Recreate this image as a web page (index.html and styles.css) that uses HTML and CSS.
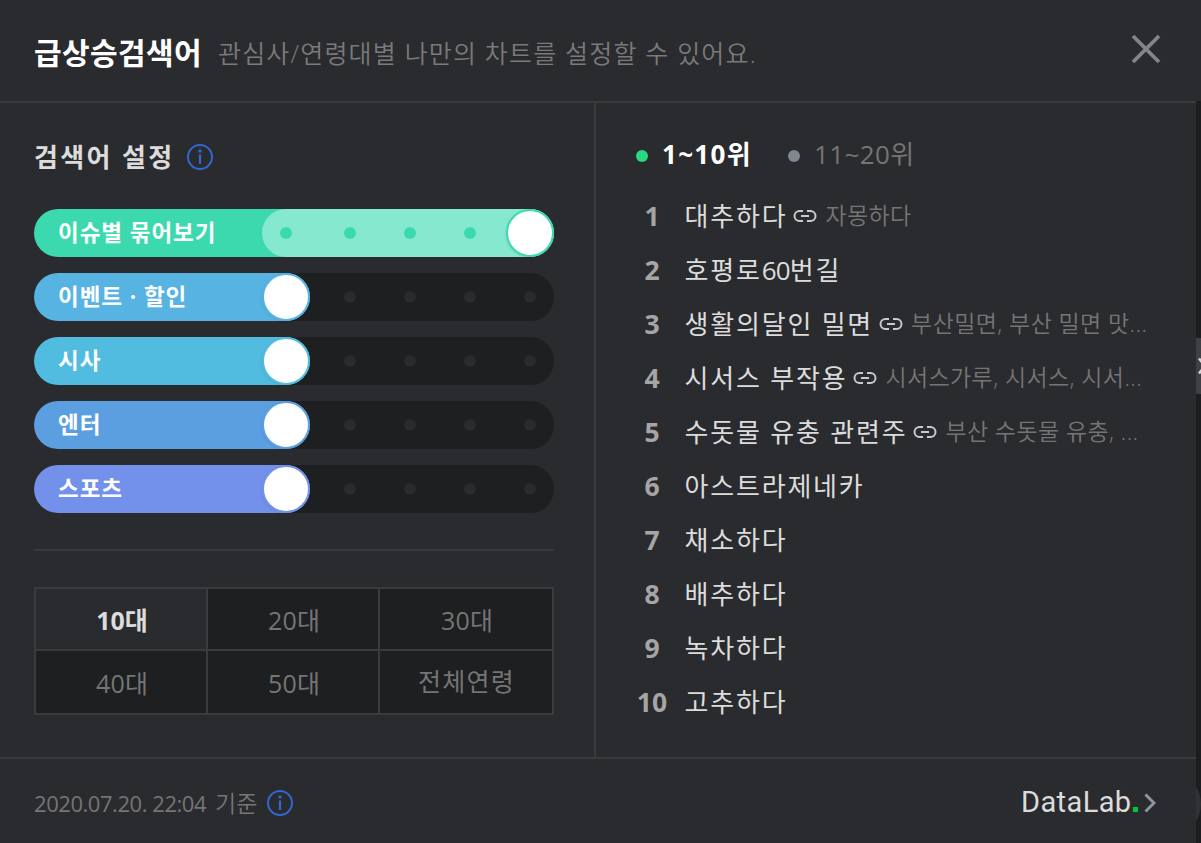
FILE: index.html
```
<!DOCTYPE html>
<html lang="ko">
<head>
    <meta charset="utf-8">
    <title>급상승검색어</title>
    <link rel="stylesheet" href="styles.css">
</head>
<body>
    <svg class="symbols">
        <symbol id="info" viewBox="0 0 26 26">
            <circle cx="13" cy="13" r="12" fill="none" stroke="currentColor" stroke-width="2"/>
            <path d="M13 10.5V20" stroke="currentColor" stroke-width="2.200" fill="none"/>
            <circle cx="13" cy="7" r="1.700" fill="currentColor"/>
        </symbol>
        <symbol id="link" viewBox="0 0 24 14">
            <path d="M10 2H6.500a5 5 0 0 0 0 10H10M14 2h3.500a5 5 0 0 1 0 10H14M8 7h8" fill="none" stroke="currentColor" stroke-width="2"/>
        </symbol>
    </svg>

    <div class="panel">
        <header class="header">
            <h1>급상승검색어</h1>
            <p class="desc">관심사/연령대별 나만의 차트를 설정할 수 있어요.</p>
            <button type="button" class="close" aria-label="닫기">
                <svg width="30" height="30" viewBox="0 0 30 30"><path d="M2 2l26 26M28 2L2 28" stroke="#80868b" stroke-width="3.800" fill="none"/></svg>
            </button>
        </header>

        <div class="content">
            <section class="setting">
                <h2>검색어 설정 <svg class="info"><use href="#info"/></svg></h2>
                <div class="sliders">
                    <div class="slider issue full">
                        <div class="fill"><span class="label">이슈별 묶어보기</span></div>
                        <div class="steps"><i></i><i></i><i></i><i></i><b class="knob"></b></div>
                    </div>
                    <div class="slider event">
                        <div class="fill"><span class="label">이벤트 · 할인</span></div>
                        <div class="steps"><b class="knob"></b><i></i><i></i><i></i><i></i></div>
                    </div>
                    <div class="slider news">
                        <div class="fill"><span class="label">시사</span></div>
                        <div class="steps"><b class="knob"></b><i></i><i></i><i></i><i></i></div>
                    </div>
                    <div class="slider enter">
                        <div class="fill"><span class="label">엔터</span></div>
                        <div class="steps"><b class="knob"></b><i></i><i></i><i></i><i></i></div>
                    </div>
                    <div class="slider sports">
                        <div class="fill"><span class="label">스포츠</span></div>
                        <div class="steps"><b class="knob"></b><i></i><i></i><i></i><i></i></div>
                    </div>
                </div>
                <div class="ages">
                    <span class="on">10대</span>
                    <span>20대</span>
                    <span>30대</span>
                    <span>40대</span>
                    <span>50대</span>
                    <span class="all">전체연령</span>
                </div>
            </section>

            <section class="ranking">
                <div class="tabs">
                    <span class="tab on">1~10위</span>
                    <span class="tab">11~20위</span>
                </div>
                <ol class="list">
                    <li><em>1</em><span class="word">대추하다</span><svg class="link"><use href="#link"/></svg><span class="rel">자몽하다</span></li>
                    <li><em>2</em><span class="word">호평로<span class="num">60</span>번길</span></li>
                    <li><em>3</em><span class="word">생활의달인 밀면</span><svg class="link"><use href="#link"/></svg><span class="rel">부산밀면, 부산 밀면 맛...</span></li>
                    <li><em>4</em><span class="word">시서스 부작용</span><svg class="link"><use href="#link"/></svg><span class="rel">시서스가루, 시서스, 시서...</span></li>
                    <li><em>5</em><span class="word">수돗물 유충 관련주</span><svg class="link"><use href="#link"/></svg><span class="rel">부산 수돗물 유충, ...</span></li>
                    <li><em>6</em><span class="word">아스트라제네카</span></li>
                    <li><em>7</em><span class="word">채소하다</span></li>
                    <li><em>8</em><span class="word">배추하다</span></li>
                    <li><em>9</em><span class="word">녹차하다</span></li>
                    <li><em>10</em><span class="word">고추하다</span></li>
                </ol>
            </section>
        </div>

        <footer class="footer">
            <p class="date"><span>2020.07.20. 22:04</span> 기준</p>
            <svg class="info"><use href="#info"/></svg>
            <a class="datalab"><span class="logo">DataLab</span><i class="dot"></i><svg width="12" height="20" viewBox="0 0 12 20"><path d="M1.500 1.500L10 10l-8.500 8.500" stroke="#8e959d" stroke-width="3" fill="none"/></svg></a>
        </footer>
    </div>

    <div class="side">
        <div class="next"><svg width="5" height="20" viewBox="0 0 5 20"><path d="M3 2.500L9 10l-6 7.500" stroke="#d5d7da" stroke-width="2.500" fill="none"/></svg></div>
        <div class="round"></div>
    </div>
</body>
</html>
```
FILE: styles.css
```
* {
    box-sizing: border-box;
}
body {
    display: flex;
    width: 1201px;
    height: 843px;
    margin: 0;
    overflow: hidden;
    background: #2a2b2e;
    color: #dcdcdc;
    font-family: "Open Sans", "Noto Sans CJK KR", sans-serif;
}
h1, h2, p, ol {
    margin: 0;
    padding: 0;
}
.symbols {
    position: absolute;
    width: 0;
    height: 0;
}
.panel {
    display: flex;
    flex-direction: column;
    width: 1196px;
    flex: none;
}

/* header */
.header {
    display: flex;
    align-items: center;
    height: 103px;
    padding: 4px 35px 0 34px;
    border-bottom: 2px solid #3a3b3d;
}
h1 {
    width: 184px;
    font-size: 30px;
    line-height: 40px;
    letter-spacing: 0.4px;
    color: #fff;
    white-space: nowrap;
}
.desc {
    font-size: 25px;
    line-height: 40px;
    letter-spacing: 1.180px;
    color: #7a7a7a;
    font-weight: 350;
    white-space: nowrap;
}
.close {
    display: flex;
    margin: -8px 0 0 auto;
    padding: 0;
    border: 0;
    background: none;
}

/* left side */
.content {
    display: flex;
    height: 654px;
}
.setting {
    width: 596px;
    padding: 34px 40px 0 34px;
    border-right: 2px solid #3a3b3d;
}
h2 {
    display: flex;
    align-items: center;
    gap: 13px;
    height: 40px;
    font-size: 26px;
    line-height: 38px;
    letter-spacing: 2.350px;
    white-space: nowrap;
}
.info {
    width: 26px;
    height: 26px;
    color: #3267d0;
}
.sliders {
    display: flex;
    flex-direction: column;
    gap: 16px;
    margin-top: 32px;
    padding-bottom: 36px;
    border-bottom: 2px solid #3a3b3f;
}
.slider {
    display: grid;
    grid-template-columns: 228px 48px 244px;
    height: 48px;
    border-radius: 24px;
    background: #1e1f21;
}
.fill {
    grid-area: 1 / 1 / 2 / 3;
    padding-left: 24px;
    border-radius: 24px;
    background: var(--color);
}
.full .fill {
    grid-column-end: 4;
}
.label {
    font-size: 22.500px;
    line-height: 48px;
    letter-spacing: 0.950px;
    font-weight: bold;
    color: #fff;
    white-space: nowrap;
}
.steps {
    grid-area: 1 / 2 / 2 / 4;
    display: grid;
    grid-template-columns: 48px 80px 40px 80px 40px;
    align-items: center;
    justify-items: center;
    border-radius: 24px;
}
.full .steps {
    background: #84e9cf;
}
.steps i {
    width: 12px;
    height: 12px;
    border-radius: 50%;
    background: #2a2b2e;
}
.full .steps i {
    background: var(--color);
}
.knob {
    width: 48px;
    height: 48px;
    border: 2px solid var(--color);
    border-radius: 50%;
    background: #fff;
    box-shadow: -1px 1px 2px rgba(0, 0, 0, 0.06);
}
.issue { --color: #3dd9ae; }
.event { --color: #57b3e2; }
.news { --color: #51bbe0; }
.enter { --color: #5c9fe1; }
.sports { --color: #7391ea; }

.ages {
    display: grid;
    grid-template: 60px 62px / 170px 170px 172px;
    gap: 2px;
    margin-top: 36px;
    border: 2px solid #3a3b3e;
    background: #3a3b3e;
}
.ages span {
    display: flex;
    align-items: center;
    justify-content: center;
    padding: 1px 0 0 2px;
    background: #1e1f21;
    font-size: 25px;
    line-height: 34px;
    letter-spacing: 0.200px;
    color: #757575;
}
.ages .on {
    background: #2a2b2e;
    color: #dcdcdc;
    font-weight: bold;
    letter-spacing: 0;
}
.ages .all {
    padding: 0 0 2px 1px;
    letter-spacing: 1.200px;
}

/* right side */
.ranking {
    padding: 31px 0 0 40px;
}
.tabs {
    display: flex;
    gap: 36px;
    height: 38px;
}
.tab {
    display: flex;
    align-items: center;
    gap: 14px;
    font-size: 26px;
    letter-spacing: 0.400px;
    color: #757575;
    white-space: nowrap;
}
.tab::before {
    content: "";
    width: 12px;
    height: 12px;
    margin-top: 6px;
    border-radius: 50%;
    background: #80868e;
}
.tab.on {
    font-weight: bold;
    letter-spacing: 1.300px;
    color: #fff;
}
.tab.on::before {
    background: #27d980;
}
.list {
    margin-top: 16px;
    list-style: none;
}
.list li {
    display: flex;
    align-items: center;
    height: 54px;
    white-space: nowrap;
}
.list em {
    width: 32px;
    margin-right: 16.500px;
    padding-top: 2px;
    font-size: 26.500px;
    font-style: normal;
    font-weight: bold;
    text-align: center;
    color: #a5a5a5;
}
.word {
    font-size: 26px;
    letter-spacing: 1.800px;
}
.num {
    letter-spacing: -0.800px;
}
.link {
    width: 24px;
    height: 14px;
    margin: 1px 8px 0 6px;
    color: #c8cacd;
}
.rel {
    padding-bottom: 2px;
    font-size: 23px;
    font-weight: 350;
    letter-spacing: 0.400px;
    color: #757575;
}

/* footer */
.footer {
    display: flex;
    align-items: center;
    flex: 1;
    padding: 4px 40px 0 34px;
    border-top: 2px solid #3a3b3d;
}
.date {
    width: 233px;
    padding-bottom: 2px;
    font-size: 23px;
    font-weight: 350;
    color: #757575;
    white-space: nowrap;
}
.date span {
    margin-right: 3px;
    font-size: 22px;
    font-weight: 400;
    letter-spacing: -0.450px;
}
.datalab {
    display: flex;
    align-items: center;
    margin-left: auto;
}
.logo {
    width: 112px;
    padding-bottom: 2px;
    font-family: Roboto, sans-serif;
    font-size: 29px;
    font-weight: 400;
    line-height: 30px;
    letter-spacing: 0.400px;
}
.dot {
    width: 5px;
    height: 5px;
    margin: 13px 6px 0 0;
    background: #00c73c;
}

/* strip of the page on the right */
.side {
    display: flex;
    flex-direction: column;
    width: 5px;
    margin-top: 101px;
    overflow: hidden;
    background: #1c1d1f;
}
.next {
    display: flex;
    align-items: center;
    height: 56px;
    margin-top: 237px;
    background: #3e4045;
}
.round {
    width: 64px;
    height: 64px;
    margin: 378px 0 0 -59px;
    border-radius: 50%;
    background: #313235;
}
```
